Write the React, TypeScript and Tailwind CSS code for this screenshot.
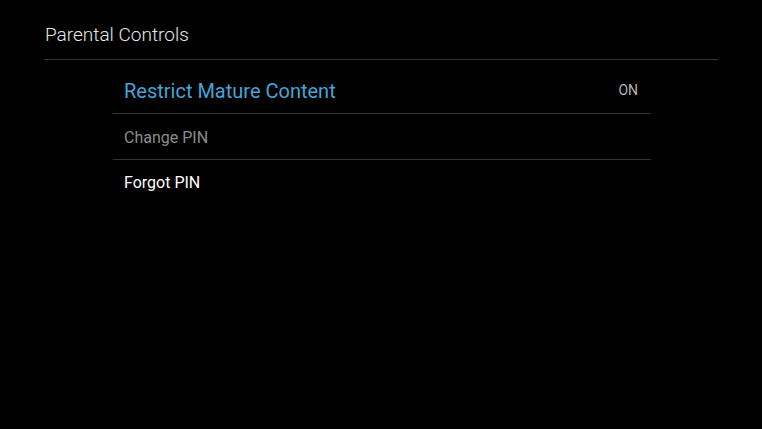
export default function App() {
  return (
    <div className="w-[762px] h-[429px] bg-black overflow-hidden" style={{ fontFamily: "Roboto, 'Noto Sans', sans-serif" }}>
      <div className="pl-[44px] pr-[44px] pt-[22px]">
        <h1 className="text-[19px] font-light text-[#e6e6e6] pl-px leading-[26px]">Parental Controls</h1>
        <div className="mt-[11px] h-px bg-[#333333]" />
      </div>
      <div className="ml-[113px] w-[538px]">
        <div className="h-[54px] flex items-center justify-between pl-[11px] pr-[13px] pt-[9px] border-b border-[#333333]">
          <span className="text-[20px] text-[#44a6d9]">Restrict Mature Content</span>
          <span className="text-[14px] text-[#b5b5b5] -mt-[2px]">ON</span>
        </div>
        <div className="h-[46px] flex items-center pl-[11px] pt-[3px] border-b border-[#333333]">
          <span className="text-[16px] text-[#8c8c8c]">Change PIN</span>
        </div>
        <div className="h-[46px] flex items-center pl-[11px]">
          <span className="text-[16px] text-white">Forgot PIN</span>
        </div>
      </div>
    </div>
  );
}
